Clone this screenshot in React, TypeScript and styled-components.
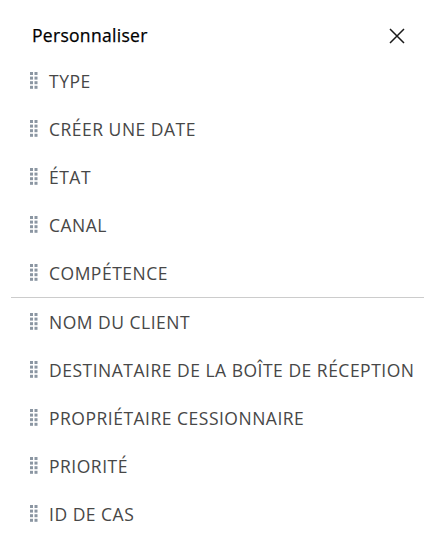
import styled, { createGlobalStyle } from "styled-components";

const GlobalStyle = createGlobalStyle`
  html, body {
    margin: 0;
    padding: 0;
    background: #ffffff;
  }
  body {
    font-family: "Open Sans", "Liberation Sans", sans-serif;
  }
`;

const Panel = styled.div`
  width: 436px;
  box-sizing: border-box;
  padding: 0 12px 0 11px;
`;

const Header = styled.div`
  height: 57px;
  box-sizing: border-box;
  padding: 24px 18px 0 21px;
  display: flex;
  justify-content: space-between;
  align-items: flex-start;
`;

const Title = styled.h2`
  margin: 0;
  font-size: 17.5px;
  line-height: 22px;
  font-weight: 400;
  letter-spacing: 0.3px;
  color: #000000;
  -webkit-text-stroke: 0.25px #000000;
`;

const CloseButton = styled.button`
  border: none;
  background: none;
  padding: 0;
  width: 18px;
  height: 18px;
  margin-top: 3px;
  display: flex;
  align-items: center;
  justify-content: center;
  cursor: pointer;
`;

const List = styled.ul`
  list-style: none;
  margin: 0;
  padding: 0;
`;

const Row = styled.li`
  height: 48px;
  display: flex;
  align-items: center;
  gap: 11px;
  padding-left: 19px;
  font-size: 17.5px;
  color: #474747;
  letter-spacing: 0.5px;
  white-space: nowrap;
`;

const Divider = styled.hr`
  margin: 0;
  border: none;
  height: 1px;
  background: #cccccc;
`;

function Grip() {
  const dots = [];
  for (let r = 0; r < 4; r++) {
    for (let c = 0; c < 2; c++) {
      dots.push(<rect key={`${r}-${c}`} x={c * 4.5} y={r * 4.6} width={3} height={3} fill="#8b96a2" />);
    }
  }
  return (
    <svg width="8" height="18" viewBox="0 0 8 18">
      {dots}
    </svg>
  );
}

const pinned = ["TYPE", "CRÉER UNE DATE", "ÉTAT", "CANAL", "COMPÉTENCE"];
const others = ["NOM DU CLIENT", "DESTINATAIRE DE LA BOÎTE DE RÉCEPTION", "PROPRIÉTAIRE CESSIONNAIRE", "PRIORITÉ", "ID DE CAS"];

export default function App() {
  return (
    <Panel>
      <GlobalStyle />
      <Header>
        <Title>Personnaliser</Title>
        <CloseButton aria-label="Fermer">
          <svg width="16" height="16" viewBox="0 0 16 16">
            <path d="M1 1 L15 15 M15 1 L1 15" stroke="#1a1a1a" strokeWidth="1.5" />
          </svg>
        </CloseButton>
      </Header>
      <List>
        {pinned.map((label) => (
          <Row key={label}>
            <Grip />
            {label}
          </Row>
        ))}
      </List>
      <Divider />
      <List>
        {others.map((label) => (
          <Row key={label}>
            <Grip />
            {label}
          </Row>
        ))}
      </List>
    </Panel>
  );
}
